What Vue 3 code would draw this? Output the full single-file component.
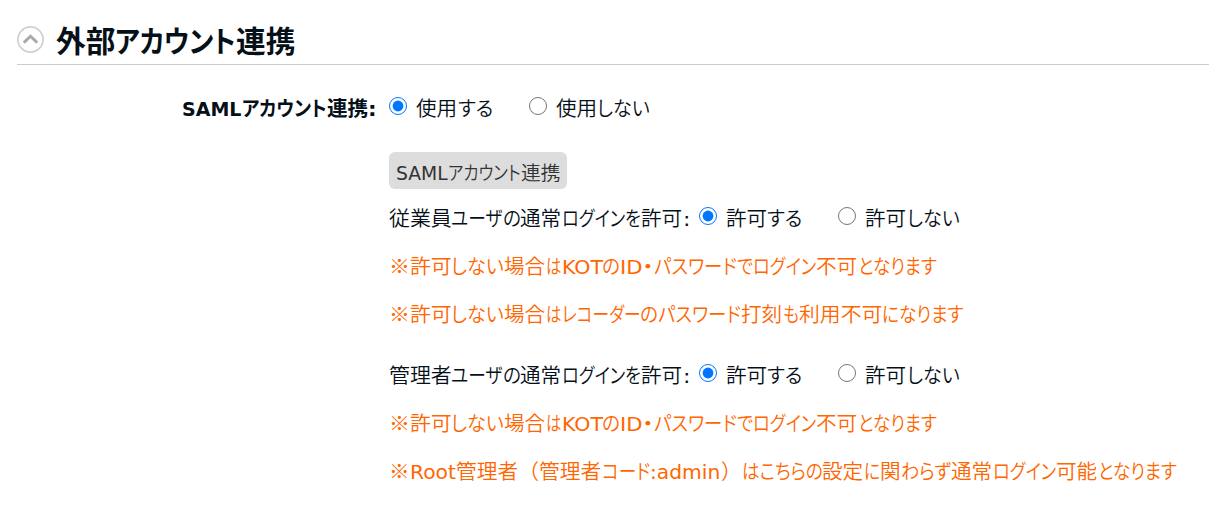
<script setup>
import { h, ref } from 'vue'

const open = ref(true)
const saml = ref('use')

const groups = ref([
  {
    id: 'employee',
    label: '従業員ユーザの通常ログインを許可:',
    value: 'allow',
    notes: [
      '※許可しない場合はKOTのID・パスワードでログイン不可となります',
      '※許可しない場合はレコーダーのパスワード打刻も利用不可になります',
    ],
  },
  {
    id: 'admin',
    label: '管理者ユーザの通常ログインを許可:',
    value: 'allow',
    notes: [
      '※許可しない場合はKOTのID・パスワードでログイン不可となります',
      '※Root管理者（管理者コード:admin）はこちらの設定に関わらず通常ログイン可能となります',
    ],
  },
])

const SAML_OPTIONS = [
  { id: 'use', label: '使用する' },
  { id: 'unuse', label: '使用しない' },
]

const LOGIN_OPTIONS = [
  { id: 'allow', label: '許可する' },
  { id: 'deny', label: '許可しない' },
]

// Kana are set narrower than kanji, so each script gets its own run
const RUNS = /([\u3041-\u309f]+|・|[\u30a1-\u30fa\u30fc-\u30ff]+|[!-~]+)/

// Advance of each run, in em
const WIDTHS = {
  する: 1.68,
  しない: 2.55,
  の: 0.86,
  を: 0.76,
  は: 0.75,
  で: 0.76,
  も: 0.78,
  に: 0.78,
  わらず: 2.42,
  となります: 3.78,
  になります: 3.93,
  はこちらの: 3.88,
  ユーザ: 2.46,
  ログイン: 3.04,
  パスワード: 4.0,
  レコーダー: 3.78,
  コード: 2.33,
  アカウント: 3.72,
  '・': 0.54,
  KOT: 1.95,
  ID: 1.08,
  Root: 2.22,
  ':admin': 3.4,
  SAML: 2.62,
  ':': 0.38,
}

const BOLD_WIDTHS = { アカウント: 4.08, SAML: 2.87, ':': 0.42 }

function fit({ el }) {
  const box = el.parentNode
  el.style.transform = `scaleX(${box.getBoundingClientRect().width / el.offsetWidth})`
}

const JpText = (props) =>
  h('span', { class: 'jp' }, props.text.split(RUNS).filter(Boolean).map((run) => {
    const width = (props.bold && BOLD_WIDTHS[run]) || WIDTHS[run] || run.length
    const script = /^[!-~]/.test(run) ? 'latin' : 'cjk'
    return h('span', { class: 'run', style: { width: width + 'em' } }, [
      h('span', { class: ['glyphs', script, WIDTHS[run] && 'narrow'], onVnodeMounted: fit }, run),
    ])
  }))
JpText.props = { text: String, bold: Boolean }
</script>

<template>
  <section class="section">
    <header class="section-header">
      <button class="toggle" type="button" @click="open = !open">
        <svg viewBox="0 0 28 28" width="28" height="28">
          <circle cx="13.5" cy="14.5" r="12.6" fill="#fff" stroke="#d0d0d0" stroke-width="1.7" />
          <path d="M6.8 17.6 L13.5 11.2 L20.2 17.6" fill="none" stroke="#aaa" stroke-width="3" />
        </svg>
      </button>
      <h2 class="title"><JpText text="外部アカウント連携" bold /></h2>
    </header>

    <div v-if="open" class="row">
      <div class="row-label"><JpText text="SAMLアカウント連携:" bold /></div>
      <div class="row-body">
        <div class="options">
          <label v-for="o in SAML_OPTIONS" :key="o.id" class="option">
            <input type="radio" name="saml" :value="o.id" v-model="saml" />
            <JpText :text="o.label" />
          </label>
        </div>

        <button class="btn-saml" type="button"><JpText text="SAMLアカウント連携" /></button>

        <div v-for="g in groups" :key="g.id" class="group">
          <div class="options">
            <span class="group-label"><JpText :text="g.label" /></span>
            <label v-for="o in LOGIN_OPTIONS" :key="o.id" class="option">
              <input type="radio" :name="g.id" :value="o.id" v-model="g.value" />
              <JpText :text="o.label" />
            </label>
          </div>
          <p v-for="n in g.notes" :key="n" class="note"><JpText :text="n" /></p>
        </div>
      </div>
    </div>
  </section>
</template>

<style>
body {
  margin: 0;
  background: #fff;
  overflow: hidden;
}

.jp {
  display: flex;
  align-items: baseline;
  height: 32px;
  line-height: 32px;
  white-space: nowrap;
}

.jp .run {
  flex: none;
}

.jp .glyphs {
  display: inline-block;
  transform-origin: 0 50%;
}

.jp .narrow {
  font-feature-settings: 'palt';
}

.jp .latin {
  font-family: 'DejaVu Sans', sans-serif;
  font-size: 0.95em;
  font-weight: 400;
}

.row-label .jp .latin {
  font-weight: 700;
}
</style>

<style scoped>
.section {
  height: 518px;
  padding-left: 17px;
  box-sizing: border-box;
  color: #061018;
  font-family: 'Noto Sans CJK JP', sans-serif;
  font-size: 20.8px;
  font-weight: 350;
}

.section-header {
  display: flex;
  align-items: flex-start;
  height: 64px;
  border-bottom: 1px solid #ccc;
}

.toggle {
  width: 28px;
  height: 28px;
  margin: 25px 11px 0 0;
  padding: 0;
  border: none;
  background: none;
  cursor: pointer;
}

.toggle svg {
  display: block;
}

.title {
  margin: 24px 0 0;
  font-size: 29.6px;
  font-weight: 700;
}

.row {
  display: flex;
  padding-top: 26px;
}

.row-label {
  display: flex;
  justify-content: flex-end;
  width: 360px;
  margin-right: 12px;
  font-weight: 700;
}

.row-body {
  flex: 1;
}

.options {
  display: flex;
  align-items: center;
  height: 32px;
}

.option {
  display: flex;
  align-items: center;
  margin-right: 36px;
}

.option input {
  width: 18px;
  height: 18px;
  margin: 0 9px 2px 0;
  accent-color: #0075ff;
}

.btn-saml {
  display: flex;
  justify-content: center;
  width: 178px;
  height: 37px;
  margin: 29px 0 12px;
  padding: 4px 0 0;
  border: none;
  border-radius: 6px;
  background: #ddd;
  color: #333;
  font-family: inherit;
  font-size: 19.6px;
  font-weight: 350;
}

.group {
  margin-bottom: 29px;
}

.group-label {
  margin-right: 8px;
}

.note {
  margin: 16px 0 0;
  color: #ff6600;
}
</style>
